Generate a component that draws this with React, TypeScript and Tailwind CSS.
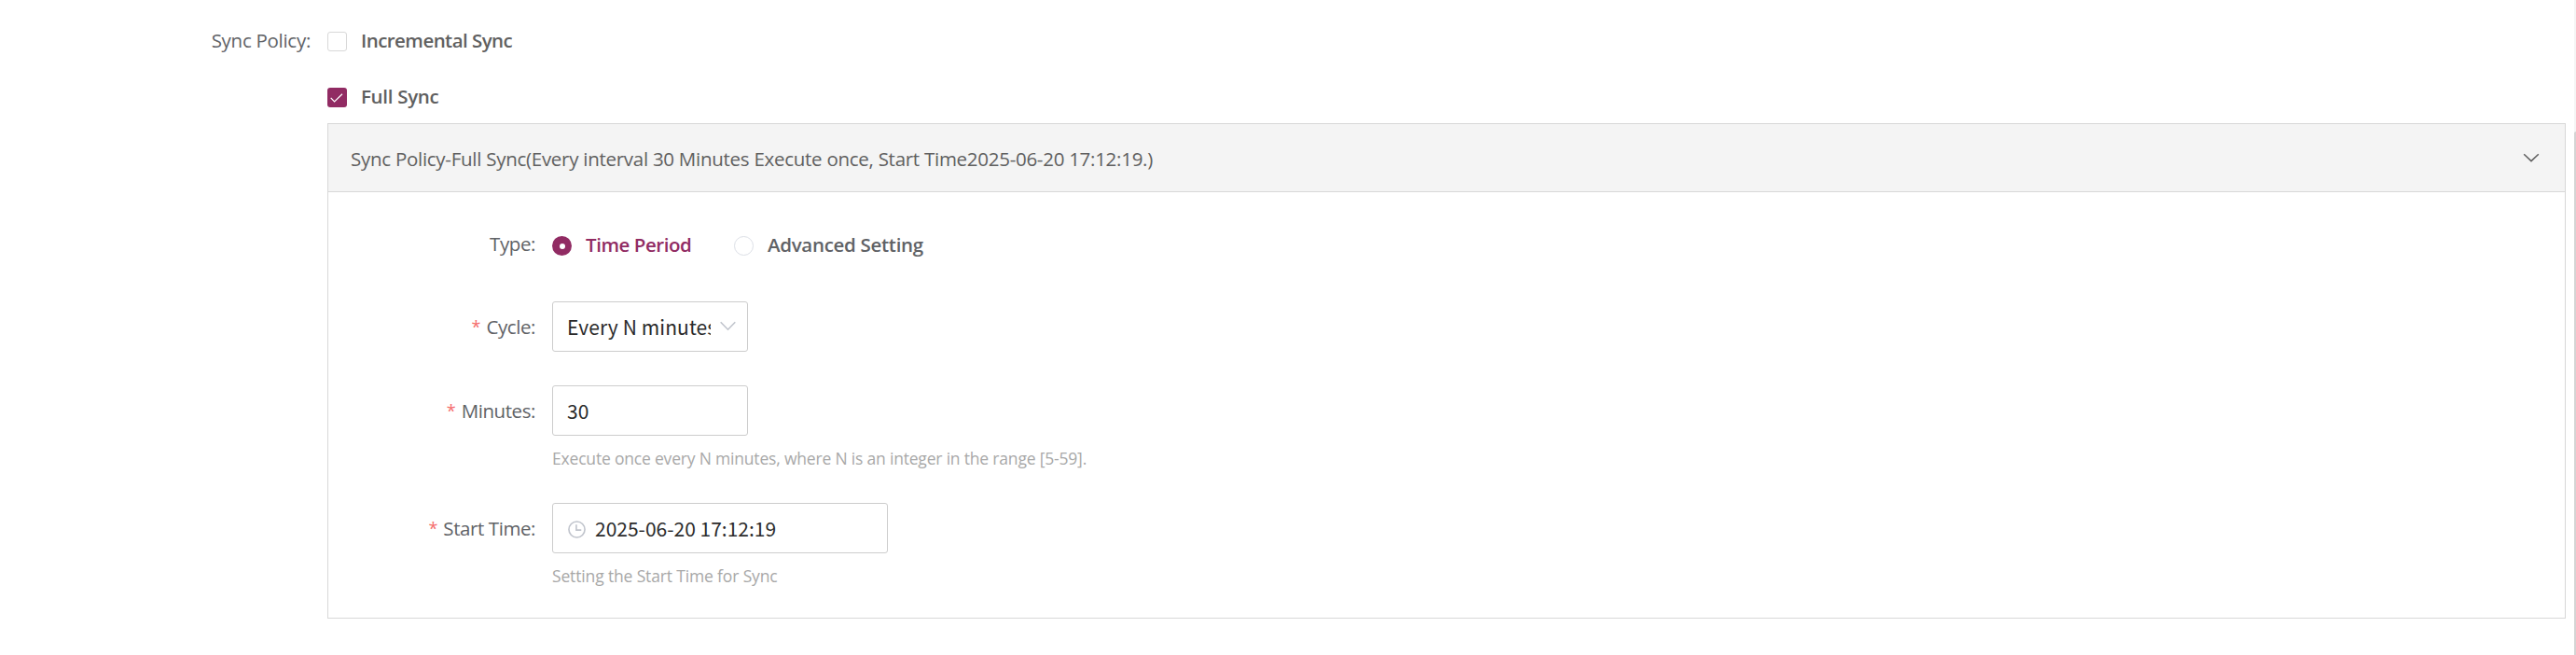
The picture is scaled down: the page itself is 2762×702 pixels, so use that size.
import React from 'react';

const LABEL = "font-['Open_Sans',sans-serif] text-[20.5px] leading-[30px] whitespace-nowrap";
const FIELD = "flex h-[54px] items-center rounded-[3px] border border-[#cdcdcd] bg-white font-['Noto_Sans_CJK_SC',sans-serif] text-[21px] leading-[30px] whitespace-nowrap text-[#2b2b2b]";
const HELP = "mt-3 font-['Open_Sans',sans-serif] text-[17.5px] leading-6 whitespace-nowrap text-[#a8a8a8]";

function RowLabel({ text, required = false }: { text: string; required?: boolean }) {
  return (
    <div className="mr-[18px] flex w-[222px] shrink-0 justify-end">
      {required && (
        <span className="mr-[6px] font-['Open_Sans',sans-serif] text-[18px] leading-[30px] text-[#f56c6c]">*</span>
      )}
      <span className={`${LABEL} tracking-[-0.42px] text-[#606266]`}>{text}</span>
    </div>
  );
}

export default function App() {
  return (
    <div className="flex h-[702px] w-full overflow-hidden bg-white">
      <div className="flex min-w-0 flex-1 pt-[28px]">
        <div className="flex w-[333px] shrink-0 justify-end">
          <span className={`${LABEL} tracking-[-0.28px] text-[#606266]`}>Sync Policy:</span>
        </div>
        <div className="mr-[9px] ml-[18px] flex-1">
          <label className="flex h-[30px]">
            <span className="mt-[6px] mr-[15px] size-[21px] shrink-0 rounded-[3px] border border-[#d8d8d8]" />
            <span className={`${LABEL} font-semibold tracking-[-0.55px] text-[#606060]`}>Incremental Sync</span>
          </label>
          <label className="mt-[30px] flex h-[30px]">
            <span className="mt-[6px] mr-[15px] flex size-[21px] shrink-0 items-center justify-center rounded-[3px] bg-[#912b63]">
              <svg className="size-[21px]" viewBox="0 0 21 21" fill="none" stroke="#fff" strokeWidth="1.2">
                <path d="M3.7 10.8 L7.6 15 L16 6.8" />
              </svg>
            </span>
            <span className={`${LABEL} font-semibold tracking-[-0.3px] text-[#606060]`}>Full Sync</span>
          </label>

          <section className="mt-[14px] h-[531px] border border-[#d8d8d8]">
            <header className="flex h-[73px] items-center justify-between border-b border-[#d8d8d8] bg-[#f4f4f4] pr-[27px] pl-[24px]">
              <span className={`${LABEL} pt-[2px] tracking-[-0.27px] text-[#606060]`}>
                Sync Policy-Full Sync(Every interval 30 Minutes Execute once, Start Time2025-06-20 17:12:19.)
              </span>
              <svg className="h-[10px] w-[18px]" viewBox="0 0 18 10" fill="none" stroke="#606060" strokeWidth="1.5">
                <path d="M1.2 1.2 L9 8.6 L16.8 1.2" />
              </svg>
            </header>

            <div className="pt-[40px]">
              <div className="flex h-[30px]">
                <RowLabel text="Type:" />
                <label className="mt-px flex">
                  <span className="mt-[6px] mr-[15px] flex size-[21px] items-center justify-center rounded-full bg-[#912b63]">
                    <span className="size-[6px] rounded-full bg-white" />
                  </span>
                  <span className={`${LABEL} w-[159px] font-semibold tracking-[-0.45px] text-[#912b63]`}>Time Period</span>
                </label>
                <label className="mt-px flex">
                  <span className="mt-[6px] mr-[15px] size-[21px] rounded-full border border-[#dcdfe6]" />
                  <span className={`${LABEL} font-semibold tracking-[-0.3px] text-[#606266]`}>Advanced Setting</span>
                </label>
              </div>

              <div className="mt-[47px] flex items-center">
                <RowLabel text="Cycle:" required />
                <div className={`${FIELD} w-[210px] pl-[15px]`}>
                  <span className="w-[154px] overflow-hidden tracking-[0.1px]">Every N minutes</span>
                  <svg className="-mt-px ml-[10px] h-[11px] w-[17px]" viewBox="0 0 17 11" fill="none" stroke="#c0c4cc" strokeWidth="1.6">
                    <path d="M0.7 1.2 L8.5 9.2 L16.3 1.2" />
                  </svg>
                </div>
              </div>

              <div className="mt-[36px] flex items-center">
                <RowLabel text="Minutes:" required />
                <div className={`${FIELD} w-[210px] pl-[15px]`}>30</div>
              </div>
              <p className={`${HELP} ml-[240px] tracking-[-0.19px]`}>
                Execute once every N minutes, where N is an integer in the range [5-59].
              </p>

              <div className="mt-[36px] flex items-center">
                <RowLabel text="Start Time:" required />
                <div className={`${FIELD} w-[360px] pl-[16px]`}>
                  <svg className="mt-[2px] mr-[10px] size-[19px]" viewBox="0 0 20 20" fill="none" stroke="#c0c4cc" strokeWidth="1.7">
                    <circle cx="10" cy="10" r="9" />
                    <path d="M9.4 4.4 V10.6 H15" />
                  </svg>
                  2025-06-20 17:12:19
                </div>
              </div>
              <p className={`${HELP} ml-[240px] tracking-[-0.15px]`}>Setting the Start Time for Sync</p>
            </div>
          </section>
        </div>
      </div>
      <div className="w-[2px] shrink-0 bg-[#f5f5f5] pt-[141px]">
        <div className="h-full rounded-tl-[4px] bg-[#d4d4d4]" />
      </div>
    </div>
  );
}
